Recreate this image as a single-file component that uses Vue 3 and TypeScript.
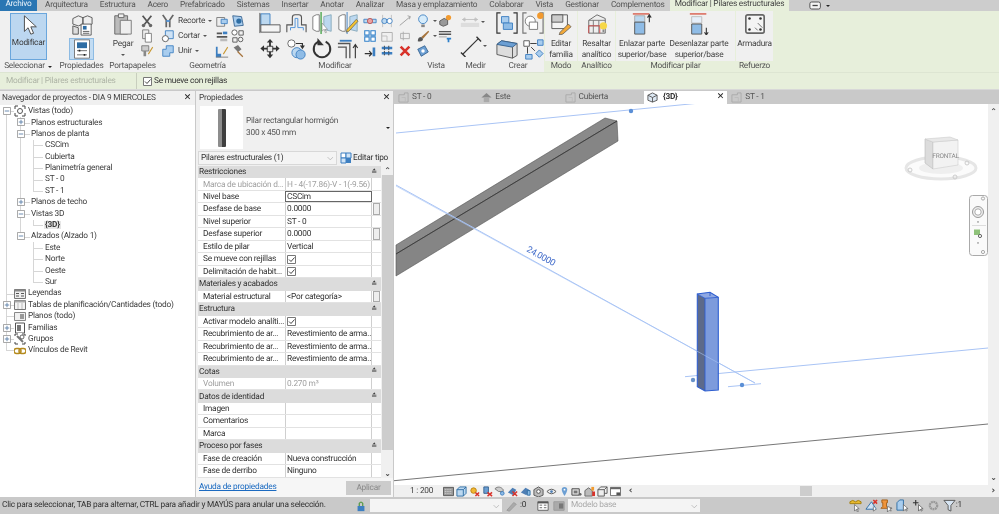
<script setup lang="ts">
// Revit: ribbon, project browser, properties palette and a 3D view
interface TreeRow {
  label: string
  lv: 0 | 1 | 2
  exp?: 'plus' | 'minus'
  icon?: string
  bold?: boolean
  guides: string[]
}

interface PropRow {
  name: string
  group?: boolean
  value?: string
  check?: boolean
  readonly?: boolean
  thumb?: boolean
  active?: boolean
}

const topTabs = ['Arquitectura', 'Estructura', 'Acero', 'Prefabricado', 'Sistemas', 'Insertar', 'Anotar', 'Analizar', 'Masa y emplazamiento', 'Colaborar', 'Vista', 'Gestionar', 'Complementos']

const tree: TreeRow[] = [
  { label: 'Vistas (todo)', lv: 0, exp: 'minus', icon: 't-views', guides: ['a start'] },
  { label: 'Planos estructurales', lv: 1, exp: 'plus', guides: ['a', 'b'] },
  { label: 'Planos de planta', lv: 1, exp: 'minus', guides: ['a', 'b'] },
  { label: 'CSCim', lv: 2, guides: ['a', 'b', 'c'] },
  { label: 'Cubierta', lv: 2, guides: ['a', 'b', 'c'] },
  { label: 'Planimetría general', lv: 2, guides: ['a', 'b', 'c'] },
  { label: 'ST - 0', lv: 2, guides: ['a', 'b', 'c'] },
  { label: 'ST - 1', lv: 2, guides: ['a', 'b', 'c half'] },
  { label: 'Planos de techo', lv: 1, exp: 'plus', guides: ['a', 'b'] },
  { label: 'Vistas 3D', lv: 1, exp: 'minus', guides: ['a', 'b'] },
  { label: '{3D}', lv: 2, bold: true, guides: ['a', 'b', 'c half'] },
  { label: 'Alzados (Alzado 1)', lv: 1, exp: 'minus', guides: ['a', 'b half'] },
  { label: 'Este', lv: 2, guides: ['a', 'c'] },
  { label: 'Norte', lv: 2, guides: ['a', 'c'] },
  { label: 'Oeste', lv: 2, guides: ['a', 'c'] },
  { label: 'Sur', lv: 2, guides: ['a', 'c half'] },
  { label: 'Leyendas', lv: 0, icon: 't-legend', guides: ['a'] },
  { label: 'Tablas de planificación/Cantidades (todo)', lv: 0, exp: 'plus', icon: 't-table', guides: ['a'] },
  { label: 'Planos (todo)', lv: 0, icon: 't-sheet', guides: ['a'] },
  { label: 'Familias', lv: 0, exp: 'plus', icon: 't-family', guides: ['a'] },
  { label: 'Grupos', lv: 0, exp: 'plus', icon: 't-group', guides: ['a'] },
  { label: 'Vínculos de Revit', lv: 0, icon: 't-link', guides: ['a half'] },
]

const props: PropRow[] = [
  { name: 'Restricciones', group: true },
  { name: 'Marca de ubicación d...', value: 'H - 4(-17.86)-V - 1(-9.56)', readonly: true },
  { name: 'Nivel base', value: 'CSCim', active: true },
  { name: 'Desfase de base', value: '0.0000', thumb: true },
  { name: 'Nivel superior', value: 'ST - 0' },
  { name: 'Desfase superior', value: '0.0000', thumb: true },
  { name: 'Estilo de pilar', value: 'Vertical' },
  { name: 'Se mueve con rejillas', check: true },
  { name: 'Delimitación de habit...', check: true },
  { name: 'Materiales y acabados', group: true },
  { name: 'Material estructural', value: '<Por categoría>', thumb: true },
  { name: 'Estructura', group: true },
  { name: 'Activar modelo analíti...', check: true },
  { name: 'Recubrimiento de ar...', value: 'Revestimiento de arma...' },
  { name: 'Recubrimiento de ar...', value: 'Revestimiento de arma...' },
  { name: 'Recubrimiento de ar...', value: 'Revestimiento de arma...' },
  { name: 'Cotas', group: true },
  { name: 'Volumen', value: '0.270 m³', readonly: true },
  { name: 'Datos de identidad', group: true },
  { name: 'Imagen', value: '' },
  { name: 'Comentarios', value: '' },
  { name: 'Marca', value: '' },
  { name: 'Proceso por fases', group: true },
  { name: 'Fase de creación', value: 'Nueva construcción' },
  { name: 'Fase de derribo', value: 'Ninguno' },
]

const viewTabs = [
  { label: 'ST - 0', icon: 't-plan' },
  { label: 'Este', icon: 't-elev' },
  { label: 'Cubierta', icon: 't-plan' },
  { label: '{3D}', icon: 't-3d', active: true },
  { label: 'ST - 1', icon: 't-plan' },
]

const viewBar = ['v-detail', 'v-style', 'v-sun', 'v-shadow', 'v-render', 'v-crop', 'v-crop2', 'v-temp', 'v-hide', 'v-pin', 'v-lock', 'v-rev', 'v-cube', 'v-frame']
const statusIcons = ['s-link', 's-under', 's-pin', 's-face', 's-drag', 's-gear']
</script>

<template>
  <div class="app">
    <svg class="defs" xmlns="http://www.w3.org/2000/svg">
      <!-- cinta -->
      <symbol id="cursor" viewBox="0 0 24 24"><path d="M7 2v17l4-4 3 7 3-1-3-7h6z" fill="#fff" stroke="#444"/></symbol>
      <symbol id="typeprops" viewBox="0 0 24 24"><path d="M2 5l6-3 5 2v7l-5 2-6-2zM13 4l5-2 5 2v7l-5 2-5-2z" fill="#eee" stroke="#555"/><path d="M2 13l6 2v7H2z" fill="#ddd" stroke="#555"/><path d="M11 11h11v12H11z" fill="#fff" stroke="#555"/><path d="M13 13h4v4h-4z" fill="#2e6da4"/><path d="M13 19h7M13 21h7" stroke="#555"/></symbol>
      <symbol id="props" viewBox="0 0 24 24"><path d="M3 1h18v22H3z" fill="#fff" stroke="#666"/><path d="M6 4h12v7H6z" fill="#2e6da4"/><path d="M6 14h12M6 19h12" stroke="#555"/><path d="M9 13v2M15 18v2" stroke="#222" stroke-width="2"/></symbol>
      <symbol id="paste" viewBox="0 0 24 24"><path d="M3 3h14v20H3z" fill="#bbb" stroke="#666"/><path d="M7 1h6v4H7z" fill="#eee" stroke="#666"/><path d="M9 8h12v15H9z" fill="#eee" stroke="#777"/></symbol>
      <symbol id="scissors" viewBox="0 0 16 16"><path d="M3 2l8 10M13 2L5 12" stroke="#555" stroke-width="2"/><circle cx="4" cy="13" r="2" fill="#666"/><circle cx="12" cy="13" r="2" fill="#666"/></symbol>
      <symbol id="copy" viewBox="0 0 16 16"><path d="M3 1h7v10H3z" fill="#eee" stroke="#777"/><path d="M6 5h7v10H6z" fill="#fff" stroke="#777"/></symbol>
      <symbol id="match" viewBox="0 0 16 16"><path d="M2 2h8v6H2z" fill="#ccc" stroke="#777"/><path d="M4 8v6h3v-6" fill="#888"/><path d="M9 11l5-8 1 1-5 8z" fill="#c8962e"/></symbol>
      <symbol id="trim" viewBox="0 0 16 16"><path d="M2 1l4 6v8M14 1L10 7v8" fill="none" stroke="#666" stroke-width="2"/><path d="M6 8h4" stroke="#4a90d9" stroke-width="2"/></symbol>
      <symbol id="cut" viewBox="0 0 16 16"><path d="M5 2h9v9H5z" fill="#cfe3f6" stroke="#3d7fc1"/><circle cx="5" cy="11" r="3.5" fill="#fff" stroke="#555"/></symbol>
      <symbol id="join" viewBox="0 0 16 16"><path d="M6 2h8v8H10v4H2V6h4z" fill="#a9cdee" stroke="#3d7fc1"/></symbol>
      <symbol id="g1" viewBox="0 0 16 16"><path d="M2 4h9v10H2z" fill="#eee" stroke="#777"/><path d="M7 6h7v5H7z" fill="#a9cdee" stroke="#3d7fc1"/></symbol>
      <symbol id="g2" viewBox="0 0 16 16"><path d="M2 2l10 1 2 10-10 1z" fill="#a9cdee" stroke="#35618f"/><circle cx="9" cy="8" r="3" fill="#2e6da4"/></symbol>
      <symbol id="g3" viewBox="0 0 16 16"><path d="M2 5h6M2 9h12" stroke="#555" stroke-width="2"/><path d="M9 3h5v3H9z" fill="#3d7fc1"/><path d="M6 11h8v3H6z" fill="#bbb"/></symbol>
      <symbol id="g4" viewBox="0 0 16 16"><circle cx="4" cy="4" r="3" fill="#fff" stroke="#555"/><path d="M9 2h5v5H9zM2 10h5v5H2z" fill="none" stroke="#555"/><circle cx="11" cy="12" r="2.6" fill="none" stroke="#555"/></symbol>
      <symbol id="g5" viewBox="0 0 16 16"><path d="M1 15V3h2v8h4V15z" fill="#3d7fc1"/><path d="M9 11l5-8 1 1-5 8z" fill="#c8962e"/><path d="M1 15h14" stroke="#777"/></symbol>
      <symbol id="hammer" viewBox="0 0 16 16"><path d="M3 4l5-3 4 5-4 3z" fill="#777"/><path d="M8 8l6 6-1 1-6-6z" fill="#a5733c"/></symbol>
      <symbol id="align" viewBox="0 0 24 24"><path d="M2 2h10v12H2z" fill="#bcd8f0" stroke="#3d7fc1"/><path d="M2 14h21v8H2z" fill="#f4f4f4" stroke="#555"/><path d="M1 1v22" stroke="#444"/></symbol>
      <symbol id="offset" viewBox="0 0 24 24"><path d="M2 22V14h6V6q0-3 3-3h4q3 0 3 3v8h5v8" fill="none" stroke="#555" stroke-width="1.2"/><path d="M6 20v-3h5V7h3v10h6v3" fill="none" stroke="#4a90d9"/></symbol>
      <symbol id="mirror1" viewBox="0 0 24 24"><path d="M2 5q4-3 7-2v18q-3 1-7-2z" fill="#fff" stroke="#777"/><path d="M14 5l8-2v18l-8-2z" fill="#bcd8f0" stroke="#8ab"/><path d="M11 0v24" stroke="#3fa142" stroke-width="1.4"/><path d="M12 12v9l2-2 2 4 1-1-2-3h3z" fill="#fff" stroke="#777" stroke-width=".6"/></symbol>
      <symbol id="mirror2" viewBox="0 0 24 24"><path d="M2 5q4-3 7-2v18q-3 1-7-2z" fill="#fff" stroke="#777"/><path d="M14 5l8-2v18l-8-2z" fill="#bcd8f0" stroke="#8ab"/><path d="M11 0v24" stroke="#3d7fc1"/><path d="M11 19l10-11 2 2-10 11-3 1z" fill="#f2c230" stroke="#555" stroke-width=".7"/></symbol>
      <symbol id="move" viewBox="0 0 24 24"><path d="M12 1l3.5 4h-2.5v5.500h5.500v-2.500l4 3.500-4 3.500v-2.500h-5.500v5.500h2.500l-3.500 4-3.500-4h2.500v-5.500h-5.500v2.500l-4-3.500 4-3.500v2.500h5.500v-5.500h-2.500z" fill="#333"/><path d="M9 9h6v6H9z" fill="#e8e8e8" stroke="#333"/></symbol>
      <symbol id="clone" viewBox="0 0 24 24"><circle cx="7" cy="6" r="4" fill="#fff" stroke="#666"/><path d="M12 6h7v4M17 8l2 3 2-3" fill="none" stroke="#333" stroke-width="1.3"/><circle cx="13" cy="16" r="5.500" fill="#bcd8f0" stroke="#3d7fc1"/><circle cx="17" cy="18" r="5" fill="#8fbce6" stroke="#3d7fc1"/></symbol>
      <symbol id="rotate" viewBox="0 0 24 24"><path d="M8 4a9 9 0 1 0 8 0" fill="none" stroke="#333" stroke-width="2.200"/><path d="M7 0v8h7" fill="#333"/></symbol>
      <symbol id="extend" viewBox="0 0 24 24"><path d="M1 6h13v16M1 10h9v12" fill="none" stroke="#555" stroke-width="1.4"/><path d="M3 3h13" stroke="#3d7fc1" stroke-width="2"/><path d="M20 22V8M17.500 11l2.500-4 2.500 4" fill="none" stroke="#333" stroke-width="1.200"/></symbol>
      <symbol id="m1" viewBox="0 0 16 16"><path d="M1 6h14v4H1z" fill="#bcd8f0" stroke="#3d7fc1"/><circle cx="8" cy="8" r="3" fill="#e9a3a3" stroke="#b55"/></symbol>
      <symbol id="m2" viewBox="0 0 16 16"><path d="M3 1v14M13 1v14" stroke="#bbb"/><circle cx="5" cy="8" r="3" fill="#bcd8f0" stroke="#3d7fc1"/><circle cx="11" cy="8" r="3" fill="#fff" stroke="#3d7fc1"/></symbol>
      <symbol id="m3" viewBox="0 0 16 16"><path d="M2 2h5v5H2zM9 2h5v5H9zM2 9h5v5H2zM9 9h5v5H9z" fill="#fff" stroke="#2e7fc9" stroke-width="1.200"/></symbol>
      <symbol id="m4" viewBox="0 0 16 16"><path d="M2 4h12v10H2z" fill="none" stroke="#aaa"/><path d="M2 8h6v6" fill="none" stroke="#bbb"/></symbol>
      <symbol id="m5" viewBox="0 0 16 16"><path d="M2 11h8M7 8l3 3-3 3" fill="none" stroke="#333" stroke-width="1.300"/><path d="M11 4h3v10h-3z" fill="#3d7fc1"/></symbol>
      <symbol id="m6" viewBox="0 0 16 16"><path d="M2 3h12v3H2zM2 9h12v3H2z" fill="#3d7fc1"/><path d="M5 2v12M10 2v12" stroke="#333" stroke-dasharray="2 1"/></symbol>
      <symbol id="m7" viewBox="0 0 16 16"><path d="M2 13L14 3M11 2l3 1-1 3" fill="none" stroke="#999"/></symbol>
      <symbol id="m8" viewBox="0 0 16 16"><path d="M3 5h10v6H3z" fill="none" stroke="#aaa"/><path d="M6 3v10" stroke="#aaa"/></symbol>
      <symbol id="del" viewBox="0 0 16 16"><path d="M3 3l10 10M13 3L3 13" stroke="#d8322a" stroke-width="3"/></symbol>
      <symbol id="bulb" viewBox="0 0 16 16"><circle cx="8" cy="6" r="5" fill="#d6ecfb" stroke="#3d7fc1"/><path d="M6 12h4v3H6z" fill="#888"/></symbol>
      <symbol id="vis2" viewBox="0 0 16 16"><path d="M2 8l5-3 4 2v5l-5 2-4-2z" fill="#999" stroke="#555"/><circle cx="12" cy="4" r="3" fill="#f29a2e"/></symbol>
      <symbol id="brush" viewBox="0 0 16 16"><path d="M6 9l8-7 1 1-7 8z" fill="#a5733c"/><path d="M2 14q0-5 4-5l2 2q0 4-6 3z" fill="#555"/></symbol>
      <symbol id="vis4" viewBox="0 0 16 16"><path d="M1 3h14M1 6h14" stroke="#555" stroke-width="1.500"/><path d="M1 9h9" stroke="#999"/><path d="M10 10h5v2h-2v3h-2v-3h-1z" fill="#2e7fc9"/></symbol>
      <symbol id="vis5" viewBox="0 0 16 16"><path d="M2 6l8-4 4 7-8 5z" fill="#6c9fd3" stroke="#35618f"/><circle cx="8" cy="8" r="2" fill="#fff"/></symbol>
      <symbol id="dim" viewBox="0 0 24 16"><path d="M3 5h18M3 5l3-2v4zM21 5l-3-2v4z" fill="none" stroke="#bbb"/><path d="M1 9h22v5H1z" fill="#ddd"/></symbol>
      <symbol id="measure" viewBox="0 0 24 24"><path d="M3 21L20 4" stroke="#333" stroke-width="1.200"/><path d="M1 19l5 5M18 2l5 5" stroke="#333" stroke-width="1.500"/></symbol>
      <symbol id="create1" viewBox="0 0 24 24"><path d="M5 1H1v22h4M19 1h4v22h-4" fill="none" stroke="#333" stroke-width="1.300"/><path d="M6 5h8v7H6z" fill="#a9cdee" stroke="#3d7fc1"/><path d="M8 12h10v7H8z" fill="#8fbce6" stroke="#3d7fc1"/></symbol>
      <symbol id="create2" viewBox="0 0 24 24"><path d="M5 1H1v22h4M19 1h4v22h-4" fill="none" stroke="#777" stroke-width="1.300"/><circle cx="9" cy="10" r="5.500" fill="#fff" stroke="#777"/><path d="M8 11h9v8H8z" fill="#fff" stroke="#777"/><circle cx="20" cy="4" r="3.500" fill="#f29a2e"/></symbol>
      <symbol id="create3" viewBox="0 0 24 24"><path d="M1 7l5-4 17 3v13l-5 3L1 18z" fill="#ddd" stroke="#555"/><path d="M6 3l17 3-5 4L1 7z" fill="#6c9fd3" stroke="#35618f"/><path d="M18 10v12" stroke="#555"/></symbol>
      <symbol id="create4" viewBox="0 0 24 24"><path d="M2 3h6v6H2z" fill="#fff" stroke="#555"/><path d="M17 2h6v6h-6zM4 18h7v5H4z" fill="#a9cdee" stroke="#3d7fc1"/><path d="M15 17l4-4 4 4-4 4z" fill="#a9cdee" stroke="#3d7fc1"/><path d="M9 6h7M10 10l4 4M6 10v7" stroke="#333"/></symbol>
      <symbol id="edit" viewBox="0 0 24 24"><path d="M2 2h17v15H2z" fill="#f4f4f4" stroke="#555"/><path d="M2 2h12v8H2z" fill="#ccc" stroke="#555"/><path d="M11 21l9-9 3 3-9 8-4 1z" fill="#f2a93a" stroke="#555" stroke-width=".8"/></symbol>
      <symbol id="analytic" viewBox="0 0 24 24"><path d="M3 8l9-6 9 4v16H3z" fill="#eee" stroke="#666"/><path d="M3 8h18M8 8v14M14 8v14M3 14h18" stroke="#777"/><path d="M3 22V14h12v8" fill="none" stroke="#d24a4a"/><circle cx="19" cy="14" r="4" fill="#f6d748"/><path d="M18 18h2v3h-2z" fill="#888"/></symbol>
      <symbol id="attach" viewBox="0 0 24 24"><path d="M2 1h18" stroke="#d85a4a" stroke-width="1.500"/><path d="M4 3h11v7H4z" fill="#bcd8f0" stroke="#aaa"/><path d="M4 10h11v13H4z" fill="#8fbce6" stroke="#555"/><path d="M20 10V3M18 5l2-3 2 3" fill="none" stroke="#333" stroke-width="1.200"/></symbol>
      <symbol id="detach" viewBox="0 0 24 24"><path d="M2 1h18" stroke="#d85a4a" stroke-width="1.500"/><path d="M4 4h11v7H4z" fill="#e6effa" stroke="#bbb"/><path d="M4 12h11v11H4z" fill="#8fbce6" stroke="#555"/><path d="M20 16v7M18 21l2 3 2-3" fill="none" stroke="#333" stroke-width="1.200"/></symbol>
      <symbol id="rebar" viewBox="0 0 24 24"><rect x="2" y="2" width="20" height="20" rx="2" fill="#f4f4f4" stroke="#666" stroke-width="1.800"/><circle cx="6" cy="6" r="1.400" fill="#333"/><circle cx="18" cy="6" r="1.400" fill="#333"/><circle cx="6" cy="18" r="1.400" fill="#333"/><circle cx="18" cy="18" r="1.400" fill="#333"/><path d="M15 11l5 5M12 16l3 3" stroke="#666"/></symbol>
      <symbol id="qat" viewBox="0 0 16 10"><rect x="1" y="1" width="12" height="8" rx="2" fill="#f4f4f4" stroke="#444"/><path d="M4 5h6" stroke="#444" stroke-width="1.500"/></symbol>
      <!-- arbol -->
      <symbol id="plus" viewBox="0 0 9 9"><path d="M.5.500h8v8h-8z" fill="#fff" stroke="#9a9a9a"/><path d="M2 4.500h5M4.500 2v5" stroke="#5a7fa8"/></symbol>
      <symbol id="minus" viewBox="0 0 9 9"><path d="M.5.500h8v8h-8z" fill="#fff" stroke="#9a9a9a"/><path d="M2 4.500h5" stroke="#5a7fa8"/></symbol>
      <symbol id="t-views" viewBox="0 0 12 12"><path d="M1 4V1h3M8 1h3v3M1 8v3h3M8 11h3V8" fill="none" stroke="#444"/><circle cx="6" cy="6" r="2.500" fill="#fff" stroke="#555"/></symbol>
      <symbol id="t-legend" viewBox="0 0 12 12"><path d="M.5 1.500h11v9H.5z" fill="#eee" stroke="#777"/><path d="M.5 1.500h11v2H.5z" fill="#888"/><path d="M2 5.500h3M2 8h3M7 5.500h3M7 8h3" stroke="#555"/></symbol>
      <symbol id="t-table" viewBox="0 0 12 12"><path d="M.5 1.500h11v9H.5z" fill="#f4f4f4" stroke="#777"/><path d="M.5 1.500h11v2H.5z" fill="#aaa"/><path d="M4 4v6M8 4v6" stroke="#bbb"/></symbol>
      <symbol id="t-sheet" viewBox="0 0 12 12"><path d="M.5 2.500h11v8H.5z" fill="#f0f0f0" stroke="#888"/><path d="M6 4h4v5H6z" fill="#999"/></symbol>
      <symbol id="t-family" viewBox="0 0 12 12"><path d="M1.500 1h9v10h-9z" fill="#fff" stroke="#555"/><path d="M3 3h4v6H3z" fill="#777"/></symbol>
      <symbol id="t-group" viewBox="0 0 12 12"><path d="M1 3V1h3M8 1h3v2M1 9v2h3M8 11h3V9" fill="none" stroke="#444"/><path d="M3 3l6 6" stroke="#777" stroke-width="2"/><circle cx="8" cy="4" r="2" fill="none" stroke="#666"/></symbol>
      <symbol id="t-link" viewBox="0 0 12 12"><rect x="0" y="3.500" width="7" height="5" rx="2.500" fill="none" stroke="#b48a1e" stroke-width="1.500"/><rect x="5" y="3.500" width="7" height="5" rx="2.500" fill="none" stroke="#b48a1e" stroke-width="1.500"/></symbol>
      <symbol id="t-plan" viewBox="0 0 12 12"><path d="M1 3h6V1h4v10H1z" fill="none" stroke="#aaa"/><path d="M4 6h4v5" fill="none" stroke="#bbb"/></symbol>
      <symbol id="t-elev" viewBox="0 0 12 12"><path d="M6 1L.5 6h11z" fill="#888"/><path d="M3 6h6v5H3z" fill="#aaa"/></symbol>
      <symbol id="t-3d" viewBox="0 0 12 12"><path d="M6 1l5 2.500v5.500L6 11 1 9V3.500z" fill="#dce7f2" stroke="#555"/><path d="M1 3.500L6 6l5-2.500M6 6v5" fill="none" stroke="#555"/></symbol>
      <symbol id="edit-type" viewBox="0 0 12 12"><path d="M1 1h5v5H1z" fill="#fff" stroke="#3d7fc1"/><path d="M6 1h5v5H6zM1 6h5v5H1z" fill="#cfe3f6" stroke="#3d7fc1"/><path d="M6 6h5v5H6z" fill="#3d7fc1"/></symbol>
      <symbol id="checkmark" viewBox="0 0 9 9"><path d="M.5.500h8v8h-8z" fill="#fff" stroke="#777"/><path d="M2 4.500l2 2 3.500-4" fill="none" stroke="#444"/></symbol>
      <!-- barra de vista -->
      <symbol id="v-detail" viewBox="0 0 12 12"><path d="M.5 1.500h11v9H.5z" fill="#999" stroke="#555"/><path d="M2 4h8M2 6h8M2 8h8" stroke="#ddd" stroke-dasharray="1 1"/></symbol>
      <symbol id="v-style" viewBox="0 0 12 12"><path d="M1 4l3-3h7v7l-3 3H1z" fill="#bcd8f0" stroke="#2e6da4"/><path d="M1 4h7v7M8 4l3-3" fill="none" stroke="#2e6da4"/></symbol>
      <symbol id="v-sun" viewBox="0 0 12 12"><circle cx="5" cy="5" r="3" fill="#f2b632" stroke="#b98412"/><path d="M7 7l4 4M11 7l-4 4" stroke="#d8322a" stroke-width="1.600"/></symbol>
      <symbol id="v-shadow" viewBox="0 0 12 12"><path d="M2 1h5v7H2z" fill="#6c9fd3" stroke="#35618f"/><path d="M6 7l5 4M11 7l-5 4" stroke="#d8322a" stroke-width="1.600"/></symbol>
      <symbol id="v-render" viewBox="0 0 12 12"><path d="M1 3c3-3 7-2 9 1v2H5z" fill="#ccc" stroke="#777"/><circle cx="9" cy="8" r="2" fill="#8fbce6" stroke="#3d7fc1"/></symbol>
      <symbol id="v-crop" viewBox="0 0 12 12"><path d="M1 7l5-5 4 2-3 6z" fill="#4f7fb5"/><path d="M6 6l5 5M11 6l-5 5" stroke="#d8322a" stroke-width="1.600"/></symbol>
      <symbol id="v-crop2" viewBox="0 0 12 12"><path d="M1 7l5-5 4 2-3 6z" fill="#4f7fb5"/><path d="M8 5h3v5H8z" fill="#8fbce6" stroke="#2e6da4"/></symbol>
      <symbol id="v-temp" viewBox="0 0 12 12"><path d="M6 1l5 3v6l-5 2-5-2V4z" fill="#bbb" stroke="#555"/><circle cx="6" cy="6" r="2" fill="#fff" stroke="#555"/></symbol>
      <symbol id="v-hide" viewBox="0 0 12 12"><path d="M1 6q5-5 10 0-5 5-10 0z" fill="none" stroke="#555"/><circle cx="6" cy="6" r="1.500" fill="#4f7fb5"/></symbol>
      <symbol id="v-pin" viewBox="0 0 12 12"><path d="M6 1q3 0 3 3 0 2-3 7-3-5-3-7 0-3 3-3z" fill="#6c9fd3"/><circle cx="6" cy="4" r="1" fill="#fff"/></symbol>
      <symbol id="v-lock" viewBox="0 0 12 12"><path d="M1 3h8v7H1z" fill="#ddd" stroke="#444"/><path d="M3 5h4v3H3z" fill="#777"/><circle cx="10" cy="9" r="1.500" fill="#666"/></symbol>
      <symbol id="v-rev" viewBox="0 0 12 12"><path d="M1 5l4-3 4 3v6H1z" fill="#bbb" stroke="#666"/><path d="M8 1h3v4H8z" fill="#f29a2e"/><path d="M9 6h3v5H9z" fill="#d8322a"/></symbol>
      <symbol id="v-cube" viewBox="0 0 12 12"><path d="M1 4h7v7H1z" fill="#eee" stroke="#555"/><path d="M4 1h7v7H8M1 4l3-3M8 4l3-3" fill="none" stroke="#555"/></symbol>
      <symbol id="v-frame" viewBox="0 0 12 12"><path d="M.5 1.500h11v9H.5z" fill="#fff" stroke="#666"/><path d="M.5 1.500h11v2H.5z" fill="#666"/><path d="M7 7h4v3H7z" fill="#555"/></symbol>
      <!-- barra de estado -->
      <symbol id="s-link" viewBox="0 0 14 14"><path d="M1 3q3-3 6 0 3-3 6 0v2H1z" fill="#e8b92e" stroke="#a27e12"/><path d="M6 6v7l2-2 1 3 1-.5-1-3h2z" fill="#fff" stroke="#555" stroke-width=".7"/></symbol>
      <symbol id="s-under" viewBox="0 0 14 14"><path d="M1 11L7 3l5 8z" fill="#cfe3f6" stroke="#2e6da4"/><path d="M9 1l4 4M13 1L9 5" stroke="#d8322a" stroke-width="1.600"/><path d="M9 8v5l3-2" fill="#fff" stroke="#555" stroke-width=".7"/></symbol>
      <symbol id="s-pin" viewBox="0 0 14 14"><path d="M2 1h6v3H7v4l2 2H1l2-2V4H2z" fill="#f0953c" stroke="#a4601a"/><path d="M8 8v6l2-2 2 1-1-3h2z" fill="#fff" stroke="#555" stroke-width=".7"/></symbol>
      <symbol id="s-face" viewBox="0 0 14 14"><path d="M1 4l3-3h4v11H1z" fill="#a9cdee" stroke="#2e6da4"/><path d="M8 6v7l2-2 1 2 1-.5-1-2h2z" fill="#fff" stroke="#555" stroke-width=".7"/></symbol>
      <symbol id="s-drag" viewBox="0 0 14 14"><path d="M4 1v6M1 4h6" stroke="#333" stroke-width="1.200"/><path d="M7 6v7l2-2 1 2 1-.5-1-2h2z" fill="#fff" stroke="#555" stroke-width=".8"/></symbol>
      <symbol id="s-gear" viewBox="0 0 14 14"><circle cx="7" cy="7" r="4" fill="none" stroke="#999" stroke-width="2.400" stroke-dasharray="2 .6"/></symbol>
      <symbol id="s-filter" viewBox="0 0 14 14"><path d="M1 1.500h12L8.500 7v6l-3-1.500V7z" fill="#d6e4f2" stroke="#555"/></symbol>
      <symbol id="s-work" viewBox="0 0 14 14"><path d="M3 7h8v6H3z" fill="#3d7fc1"/><path d="M5 7V4q2-3 4 0v3" fill="none" stroke="#5a9a4a" stroke-width="1.500"/></symbol>
      <symbol id="s-sync" viewBox="0 0 14 14"><path d="M1 12l8-9 3 2-8 8z" fill="#aaa" stroke="#999"/></symbol>
      <symbol id="s-model" viewBox="0 0 14 14"><path d="M1 2h12v10H1z" fill="#fff" stroke="#555"/><path d="M1 2h12v2H1z" fill="#555"/><path d="M3 6h3M3 9h3M8 6h3M8 9h3" stroke="#555"/></symbol>
      <symbol id="s-opt" viewBox="0 0 14 14"><path d="M1 2h12v10H1z" fill="#aaa" stroke="#999"/><path d="M7 4h5v6H7z" fill="#777"/></symbol>
    </svg>

    <nav class="tabs">
      <span class="tab-file">Archivo</span>
      <span v-for="t in topTabs" :key="t" class="tab">{{ t }}</span>
      <span class="tab-active">Modificar | Pilares estructurales</span>
      <svg class="qat"><use href="#qat" /></svg>
      <i class="caret dark" />
    </nav>

    <section class="ribbon">
      <div class="panel p-sel">
        <div class="pbody center">
          <div class="modbtn">
            <svg class="i22"><use href="#cursor" /></svg>
            <span>Modificar</span>
          </div>
        </div>
        <div class="plabel">Seleccionar <i class="caret dark" /></div>
      </div>
      <div class="panel p-prop">
        <div class="pbody stack center">
          <svg class="i22 big-a"><use href="#typeprops" /></svg>
          <div class="propbtn"><svg class="i18"><use href="#props" /></svg></div>
        </div>
        <div class="plabel">Propiedades</div>
      </div>
      <div class="panel p-port">
        <div class="pbody row">
          <div class="bigcol narrow">
            <svg class="i22"><use href="#paste" /></svg>
            <span>Pegar</span>
            <i class="caret" />
          </div>
          <div class="col">
            <svg class="i12"><use href="#scissors" /></svg>
            <svg class="i12"><use href="#copy" /></svg>
            <svg class="i12"><use href="#match" /></svg>
          </div>
        </div>
        <div class="plabel">Portapapeles</div>
      </div>
      <div class="panel p-geo">
        <div class="pbody row">
          <div class="col geo-text">
            <span class="line"><svg class="i12"><use href="#trim" /></svg><b>Recorte</b><i class="caret" /></span>
            <span class="line"><svg class="i12"><use href="#cut" /></svg><b>Cortar</b><i class="caret" /></span>
            <span class="line"><svg class="i12"><use href="#join" /></svg><b>Unir</b><i class="caret" /></span>
          </div>
          <div class="col">
            <svg class="i12"><use href="#g1" /></svg>
            <svg class="i12"><use href="#g3" /></svg>
            <svg class="i12"><use href="#g5" /></svg>
          </div>
          <div class="col">
            <svg class="i12"><use href="#g2" /></svg>
            <svg class="i12"><use href="#g4" /></svg>
            <svg class="i12"><use href="#hammer" /></svg>
          </div>
        </div>
        <div class="plabel">Geometría</div>
      </div>
      <div class="panel p-mod">
        <div class="pbody row">
          <div class="bigstack"><svg class="i20"><use href="#align" /></svg><svg class="i20"><use href="#move" /></svg></div>
          <div class="bigstack"><svg class="i20"><use href="#offset" /></svg><svg class="i20"><use href="#clone" /></svg></div>
          <div class="bigstack"><svg class="i20"><use href="#mirror1" /></svg><svg class="i20"><use href="#rotate" /></svg></div>
          <div class="bigstack"><svg class="i20"><use href="#mirror2" /></svg><svg class="i20"><use href="#extend" /></svg></div>
          <div class="col wide"><svg class="i12"><use href="#m1" /></svg><svg class="i12"><use href="#m3" /></svg><svg class="i12"><use href="#m5" /></svg></div>
          <div class="col wide"><svg class="i12"><use href="#m2" /></svg><svg class="i12"><use href="#m4" /></svg><svg class="i12"><use href="#m6" /></svg></div>
          <div class="col wide"><svg class="i12"><use href="#m7" /></svg><svg class="i12"><use href="#m8" /></svg><svg class="i12"><use href="#del" /></svg></div>
        </div>
        <div class="plabel">Modificar</div>
      </div>
      <div class="panel p-vis">
        <div class="pbody row">
          <div class="col vis-a">
            <span class="line"><svg class="i12"><use href="#bulb" /></svg><i class="caret" /></span>
            <span class="line"><svg class="i12"><use href="#brush" /></svg><i class="caret" /></span>
            <span class="line"><svg class="i12"><use href="#vis5" /></svg></span>
          </div>
          <div class="col">
            <svg class="i12"><use href="#vis2" /></svg>
            <svg class="i12"><use href="#vis4" /></svg>
            <span class="i12" />
          </div>
        </div>
        <div class="plabel">Vista</div>
      </div>
      <div class="panel p-med">
        <div class="pbody stack med">
          <span class="line"><svg class="i20 short"><use href="#dim" /></svg><i class="caret" /></span>
          <span class="line"><svg class="i20"><use href="#measure" /></svg><i class="caret" /></span>
        </div>
        <div class="plabel">Medir</div>
      </div>
      <div class="panel p-cre">
        <div class="pbody row crear">
          <div class="bigstack"><svg class="i20"><use href="#create1" /></svg><svg class="i20"><use href="#create3" /></svg></div>
          <div class="bigstack"><svg class="i20"><use href="#create2" /></svg><svg class="i20"><use href="#create4" /></svg></div>
        </div>
        <div class="plabel">Crear</div>
      </div>
      <div class="panel ctx p-modo">
        <div class="pbody"><div class="bigcol"><svg class="i22"><use href="#edit" /></svg><span>Editar<br>familia</span></div></div>
        <div class="plabel">Modo</div>
      </div>
      <div class="panel ctx p-ana">
        <div class="pbody"><div class="bigcol"><svg class="i22"><use href="#analytic" /></svg><span>Resaltar<br>analítico</span></div></div>
        <div class="plabel">Analítico</div>
      </div>
      <div class="panel ctx p-pil">
        <div class="pbody row">
          <div class="bigcol half-a"><svg class="i22"><use href="#attach" /></svg><span>Enlazar parte<br>superior/base</span></div>
          <div class="bigcol half-b"><svg class="i22"><use href="#detach" /></svg><span>Desenlazar parte<br>superior/base</span></div>
        </div>
        <div class="plabel">Modificar pilar</div>
      </div>
      <div class="panel ctx p-ref">
        <div class="pbody"><div class="bigcol"><svg class="i22"><use href="#rebar" /></svg><span>Armadura</span></div></div>
        <div class="plabel">Refuerzo</div>
      </div>
    </section>

    <section class="options">
      <span class="ctx-name">Modificar | Pilares estructurales</span>
      <span class="opt-check"><svg class="i9"><use href="#checkmark" /></svg>Se mueve con rejillas</span>
    </section>

    <main class="main">
      <aside class="browser">
        <header class="phead">Navegador de proyectos - DIA 9 MIERCOLES<span class="close">✕</span></header>
        <ul class="tree">
          <li v-for="(r, i) in tree" :key="i" class="node" :class="`lv${r.lv}`">
            <i v-for="g in r.guides" :key="g" class="vl" :class="g" />
            <i class="hl" />
            <svg v-if="r.exp" class="exp"><use :href="`#${r.exp}`" /></svg>
            <svg v-if="r.icon" class="i12 node-icon"><use :href="`#${r.icon}`" /></svg>
            <span :class="{ bold: r.bold }">{{ r.label }}</span>
          </li>
        </ul>
      </aside>

      <aside class="palette">
        <header class="phead">Propiedades<span class="close">✕</span></header>
        <div class="type">
          <div class="thumb"><i class="pillar" /></div>
          <div class="type-name">Pilar rectangular hormigón<br>300 x 450 mm</div>
          <i class="caret dark" />
        </div>
        <div class="filter">
          <div class="filter-box">Pilares estructurales (1)<span class="chev">⌵</span></div>
          <span class="edit-type"><svg class="i12"><use href="#edit-type" /></svg>Editar tipo</span>
        </div>
        <div class="props-wrap">
          <div class="ptable">
            <div v-for="(p, i) in props" :key="i" class="prow" :class="{ group: p.group, ro: p.readonly }">
              <template v-if="p.group">
                <span class="gname">{{ p.name }}</span><span class="gmark">≛</span>
              </template>
              <template v-else>
                <span class="pname">{{ p.name }}</span>
                <span class="pval" :class="{ active: p.active }">
                  <svg v-if="p.check" class="i9"><use href="#checkmark" /></svg>{{ p.value }}
                </span>
                <span class="pbtn"><i v-if="p.thumb" class="pbtn-thumb" /></span>
              </template>
            </div>
          </div>
          <div class="vscroll">
            <span class="arrow">⌃</span>
            <i class="vthumb" />
            <span class="arrow down">⌄</span>
          </div>
        </div>
        <footer class="pfoot">
          <a class="help">Ayuda de propiedades</a>
          <span class="apply">Aplicar</span>
        </footer>
      </aside>

      <section class="view">
        <div class="vtabs">
          <div v-for="(t, i) in viewTabs" :key="i" class="vtab" :class="{ on: t.active }">
            <svg class="i11"><use :href="`#${t.icon}`" /></svg>
            <span>{{ t.label }}</span>
            <span v-if="t.active" class="close">✕</span>
          </div>
        </div>
        <div class="canvas-row">
          <svg class="canvas" viewBox="394 104 594 381" xmlns="http://www.w3.org/2000/svg">
            <path d="M396 133L700 103" stroke="#a9c4f5" />
            <circle cx="631" cy="111" r="2.200" fill="#5b8fd6" />
            <path d="M396 245L605 118l12 3-221 133z" fill="#8a8a8a" stroke="#555" stroke-width=".6" />
            <path d="M396 254L617 121l1 20-222 135z" fill="#858585" stroke="#555" stroke-width=".6" />
            <path d="M396 254L617 121" stroke="#333" stroke-width=".8" />
            <path d="M396 185L755 383" stroke="#a9c4f5" />
            <text x="541" y="259" class="dim" transform="rotate(29 541 256)">24.0000</text>
            <path d="M685 376.700L988 348" stroke="#a9c4f5" />
            <path d="M728 386.700L761 383.700" stroke="#a9c4f5" />
            <circle cx="693" cy="380" r="2.200" fill="#6a93c9" />
            <circle cx="742" cy="385" r="2.200" fill="#5b8fd6" />
            <path d="M697.300 294L705 298.300V391L697.300 386.700z" fill="#5d6a8a" />
            <path d="M705 298.300L718.300 297.300V390L705 391z" fill="#7d9bdc" />
            <path d="M697.300 294L710 292.300 718.300 297.300 705 298.300z" fill="#8fa8e2" />
            <path d="M697.300 294L705 298.300 718.300 297.300M705 298.300V391M710 292.300V296" fill="none" stroke="#2f5fd0" stroke-width=".9" />
            <path d="M697.300 294V386.700L705 391 718.300 390V297.300L710 292.300z" fill="none" stroke="#2f5fd0" stroke-width="1.100" />
            <path d="M396 186L755 383" stroke="#a9c4f5" stroke-opacity=".6" />
            <path d="M394 480.700L988 424" stroke="#777" stroke-width="1" />

            <g class="cube">
              <ellipse cx="941" cy="168" rx="35" ry="11" fill="#fbfbfb" stroke="#e6e6e6" stroke-width="3" />
              <ellipse cx="941" cy="168" rx="22" ry="6" fill="#efefef" />
              <path d="M925 139l8 3v27l-8-6z" fill="#dcdcdc" stroke="#bbb" stroke-width=".6" />
              <path d="M933 142l25-2v25l-25 4z" fill="#f2f2f2" stroke="#ccc" stroke-width=".6" />
              <path d="M925 139l25-2 8 3-25 2z" fill="#e8e8e8" stroke="#ccc" stroke-width=".6" />
              <text x="945.500" y="158" class="cube-text">FRONTAL</text>
              <circle cx="910" cy="170" r="2" fill="none" stroke="#ccc" />
              <circle cx="955" cy="177" r="2" fill="none" stroke="#ccc" />
              <circle cx="967" cy="163" r="2" fill="none" stroke="#ccc" />
            </g>
            <g class="navbar">
              <rect x="969.500" y="195.500" width="18" height="60" rx="3" fill="#fafafa" stroke="#aaa" />
              <circle cx="983" cy="198.500" r="1.600" fill="none" stroke="#aaa" />
              <circle cx="983" cy="252" r="1.600" fill="none" stroke="#aaa" />
              <circle cx="978" cy="212" r="5.500" fill="#eee" stroke="#999" />
              <circle cx="978" cy="212" r="3.200" fill="#fff" stroke="#aaa" />
              <path d="M977 221.500h2l-1 1.500z" fill="#666" />
              <path d="M972 225.500h14" stroke="#ddd" />
              <rect x="974" y="229.500" width="6" height="5.500" fill="#8fc27a" />
              <circle cx="980" cy="236" r="1.600" fill="none" stroke="#666" />
              <path d="M977 242.500h2l-1 1.500z" fill="#666" />
            </g>
          </svg>
          <div class="rscroll">
            <span class="arrow">⌃</span>
            <span class="arrow">⌄</span>
          </div>
        </div>
        <div class="vbar">
          <span class="scale">1 : 200</span>
          <svg v-for="v in viewBar" :key="v" class="i11 vb"><use :href="`#${v}`" /></svg>
          <div class="hscroll">
            <span class="harrow">‹</span>
            <i class="hthumb" />
            <span class="harrow">›</span>
          </div>
        </div>
      </section>
    </main>

    <footer class="status">
      <span class="status-text">Clic para seleccionar, TAB para alternar, CTRL para añadir y MAYÚS para anular una selección.</span>
      <svg class="i12 st-work"><use href="#s-work" /></svg>
      <div class="combo w-work"><span class="chev">⌵</span></div>
      <svg class="i12 st-sync"><use href="#s-sync" /></svg>
      <span class="st-zero">:0</span>
      <svg class="i12 st-model"><use href="#s-model" /></svg>
      <svg class="i12 st-opt"><use href="#s-opt" /></svg>
      <div class="combo w-model">Modelo base<span class="chev">⌵</span></div>
      <div class="st-right">
        <svg v-for="s in statusIcons" :key="s" class="i13"><use :href="`#${s}`" /></svg>
        <span class="st-filter"><svg class="i13"><use href="#s-filter" /></svg>:1</span>
      </div>
    </footer>
  </div>
</template>

<style>
html, body { margin: 0; background: #fff; overflow: hidden; }
</style>

<style scoped>
.app {
  width: 999px;
  height: 514px;
  display: flex;
  flex-direction: column;
  overflow: hidden;
  background: #c9c9c9;
  font: 8.3px/1 Roboto, "Noto Sans", sans-serif;
  letter-spacing: -.22px;
  text-rendering: geometricPrecision;
  color: #444;
  filter: blur(.3px);
}
.defs { display: none; }
svg { display: block; flex: none; }
.i9 { width: 9px; height: 9px; }
.i11 { width: 11px; height: 11px; }
.i12 { width: 12px; height: 12px; display: block; }
.i13 { width: 13px; height: 13px; }
.i18 { width: 20px; height: 20px; }
.i20 { width: 22px; height: 22px; }
.i22 { width: 22px; height: 22px; }
.short { height: 14px; width: 20px; }
.col .i12 { width: 14px; height: 14px; }
.caret {
  display: inline-block;
  width: 0;
  height: 0;
  border: 2px solid transparent;
  border-top: 2.500px solid #555;
  border-bottom: 0;
}
.caret.dark { border-top-color: #222; }

/* pestañas superiores */
.tabs {
  height: 11px;
  flex: none;
  display: flex;
  align-items: center;
  gap: 12px;
  background: #cdcdcd;
  color: #555;
  line-height: 9px;
}
.tab-file {
  width: 37px;
  height: 11px;
  margin-right: -4px;
  text-align: center;
  background: #2a76b3;
  color: #e8f2fa;
}
.tab { white-space: nowrap; }
.tab-active {
  height: 11px;
  padding: 0 5px;
  margin-left: -7px;
  background: #e7efdb;
  color: #444;
  white-space: nowrap;
}
.qat { width: 14px; height: 9px; margin-left: 8px; }
.tabs .caret { margin-left: -9px; }

/* cinta */
.ribbon {
  height: 62px;
  flex: none;
  display: flex;
  background: #e7efdb;
  border-bottom: 1px solid #dde5d2;
  box-sizing: border-box;
}
.panel { display: flex; flex-direction: column; background: #f0f0f0; flex: none; }
.panel.ctx { background: transparent; margin-left: 1px; }
.panel.ctx .pbody { background: #f0f0f0; }
.pbody { height: 50px; display: flex; flex: none; box-sizing: border-box; }
.pbody.row { align-items: flex-start; }
.pbody.stack { flex-direction: column; }
.pbody.center { justify-content: center; align-items: center; }
.plabel {
  flex: 1;
  display: flex;
  align-items: center;
  justify-content: center;
  gap: 3px;
  color: #555;
  white-space: nowrap;
}
.p-sel { width: 56px; }
.p-prop { width: 51px; }
.p-port { width: 51px; }
.p-geo { width: 99px; }
.p-mod { width: 156px; }
.p-vis { width: 46px; }
.p-med { width: 33px; }
.p-cre { width: 52px; }
.p-modo { width: 32px; }
.p-ana { width: 37px; }
.p-pil { width: 119px; }
.p-ref { width: 37px; }

.modbtn {
  width: 37px;
  height: 47px;
  box-sizing: border-box;
  margin-left: 1px;
  display: flex;
  flex-direction: column;
  align-items: center;
  gap: 3px;
  background: #bcd7f0;
  border: 1px solid #6aa6dc;
  color: #3a3a3a;
}
.big-a { margin-top: 1px; }
.propbtn {
  width: 25px;
  height: 22px;
  margin-top: 2px;
  display: flex;
  justify-content: center;
  align-items: center;
  background: #c2dcf3;
  border: 1px solid #8dbbe3;
  box-sizing: border-box;
}
.bigcol {
  display: flex;
  flex-direction: column;
  align-items: center;
  width: 100%;
  padding-top: 2px;
  gap: 4px;
  line-height: 10.500px;
  text-align: center;
  white-space: nowrap;
}
.bigcol.narrow { width: 32px; flex: none; }
.bigcol.half-a { width: 52px; flex: none; }
.bigcol.half-b { width: 62px; flex: none; }
.col {
  display: flex;
  flex-direction: column;
  justify-content: space-between;
  align-items: center;
  height: 44px;
  margin-top: 3px;
  flex: none;
  width: 16px;
}
.col.wide { width: 17.500px; }
.line { display: flex; align-items: center; gap: 3px; }
.line b { font-weight: 400; }
.geo-text { width: 56px; align-items: flex-start; padding-left: 3px; box-sizing: border-box; }
.vis-a { width: 24px; padding-left: 3px; box-sizing: border-box; align-items: flex-start; }
.bigstack {
  width: 26px;
  height: 48px;
  margin-top: 1px;
  display: flex;
  flex-direction: column;
  justify-content: space-between;
  align-items: center;
  flex: none;
}
.med { padding: 4px 0 0 1px; gap: 6px; }
.med .line { gap: 1px; }
.crear { padding-left: 2px; }

/* barra de opciones */
.options {
  height: 17px;
  flex: none;
  display: flex;
  align-items: center;
  background: #e7efdb;
  box-sizing: border-box;
  border-bottom: 1px solid #d8d8d8;
}
.ctx-name {
  width: 137px;
  padding-left: 6px;
  box-sizing: border-box;
  color: #aeb4a6;
  height: 100%;
  line-height: 16px;
  border-right: 1px solid #c8cebe;
  white-space: nowrap;
}
.opt-check { display: flex; align-items: center; gap: 2px; margin-left: 6px; color: #333; }

/* zona central */
.main {
  flex: 1;
  min-height: 0;
  display: flex;
  gap: 1px;
  padding-top: 1px;
  background: #c9c9c9;
}
.phead {
  height: 14px;
  flex: none;
  display: flex;
  align-items: center;
  justify-content: space-between;
  padding: 0 4px 0 2px;
  background: #f0f0f0;
  color: #444;
  white-space: nowrap;
}
.close { font: 700 9px/1 "DejaVu Sans", sans-serif; color: #222; }

.browser { width: 195px; flex: none; display: flex; flex-direction: column; background: #fff; }
.tree { list-style: none; margin: 0; padding: .6px 0 0; }
.node {
  position: relative;
  height: 11.400px;
  display: flex;
  align-items: center;
  white-space: nowrap;
  color: #3d3d3d;
}
.lv0 { padding-left: 14px; }
.lv1 { padding-left: 31px; }
.lv2 { padding-left: 45px; }
.vl { position: absolute; top: 0; bottom: 0; width: 1px; background: #d6d6d6; }
.vl.a { left: 6px; }
.vl.b { left: 20px; }
.vl.c { left: 33px; }
.vl.half { bottom: 50%; }
.vl.start { top: 50%; }
.hl { position: absolute; top: 50%; height: 1px; background: #d6d6d6; }
.lv0 .hl { left: 6px; width: 8px; }
.lv1 .hl { left: 20px; width: 10px; }
.lv2 .hl { left: 33px; width: 10px; }
.exp { position: absolute; top: 1.500px; width: 8px; height: 8px; }
.lv0 .exp { left: 2.500px; }
.lv1 .exp { left: 16.500px; }
.node-icon { margin-right: 2px; position: relative; background: #fff; }
.node span { position: relative; background: #fff; padding: 0 1px; margin-left: -1px; }
.node .bold { font-weight: 700; background: #e6e6e6; }

.palette { width: 197px; flex: none; display: flex; flex-direction: column; background: #f0f0f0; }
.palette .phead { padding-left: 3px; padding-right: 3px; }
.type { height: 45px; display: flex; align-items: center; padding: 0 3px 0 4px; flex: none; }
.thumb { width: 43px; height: 43px; background: #fff; display: flex; justify-content: center; align-items: center; flex: none; }
.pillar {
  display: block;
  width: 8px;
  height: 38px;
  background: linear-gradient(90deg, #8d8d8d 50%, #3f3f3f 50%);
  border-radius: 1px;
}
.type-name { flex: 1; padding-left: 3px; line-height: 11.400px; color: #555; white-space: nowrap; }
.filter { height: 16px; display: flex; align-items: center; padding-left: 2px; gap: 3px; flex: none; }
.filter-box {
  width: 139px;
  height: 14px;
  box-sizing: border-box;
  display: flex;
  align-items: center;
  justify-content: space-between;
  padding: 0 3px 0 2px;
  background: #f4f4f4;
  border: 1px solid #d8d8d8;
  white-space: nowrap;
  color: #333;
}
.chev { color: #999; font: 8px/1 "DejaVu Sans", sans-serif; }
.edit-type { display: flex; align-items: center; gap: 1px; color: #333; white-space: nowrap; }
.props-wrap { display: flex; padding-left: 2px; flex: none; height: 312px; }
.ptable { width: 183px; flex: none; background: #fff; }
.prow {
  height: 12.480px;
  display: grid;
  grid-template-columns: 87px 87px 9px;
  align-items: center;
  box-sizing: border-box;
  border-bottom: 1px solid #e2e2e2;
  white-space: nowrap;
  color: #333;
}
.prow.group {
  display: flex;
  justify-content: space-between;
  background: #dcdcdc;
  border-bottom: 0;
  padding: 0 4px 0 1px;
  color: #333;
}
.gmark { font: 7px/1 "DejaVu Sans", sans-serif; color: #333; }
.pname { padding: 1px 0 0 5px; overflow: hidden; }
.pval {
  height: 100%;
  display: flex;
  align-items: center;
  padding: 1px 0 0 1px;
  border-left: 1px solid #cfcfcf;
  border-right: 1px solid #cfcfcf;
  box-sizing: border-box;
  overflow: hidden;
}
.pval.active { outline: 1px solid #666; outline-offset: -1px; background: #fff; }
.ro .pname, .ro .pval { color: #a0a0a0; }
.pbtn { height: 100%; display: flex; justify-content: center; }
.pbtn-thumb { display: block; width: 7px; height: 100%; box-sizing: border-box; background: #eee; border: 1px solid #aaa; }
.vscroll {
  width: 11px;
  margin-left: 1px;
  display: flex;
  flex-direction: column;
  align-items: center;
  background: #f0f0f0;
}
.arrow { font: 700 8px/9px "DejaVu Sans", sans-serif; height: 9px; color: #444; flex: none; }
.arrow.down { margin-top: auto; }
.vthumb { display: block; width: 100%; height: 275px; background: #cdcdcd; }
.pfoot {
  flex: 1;
  display: flex;
  align-items: center;
  justify-content: space-between;
  padding: 0 2px 0 3px;
  background: #f6f6f6;
}
.help { color: #1b6ac0; text-decoration: underline; white-space: nowrap; }
.apply {
  width: 45px;
  height: 14px;
  line-height: 14px;
  text-align: center;
  background: #cccccc;
  color: #8a8a8a;
}

/* vista 3D */
.view { flex: 1; min-width: 0; display: flex; flex-direction: column; background: #fff; }
.vtabs { height: 13px; flex: none; display: flex; background: #c9c9c9; }
.vtab {
  width: 83.300px;
  display: flex;
  align-items: center;
  gap: 3px;
  padding-left: 4px;
  box-sizing: border-box;
  color: #555;
  flex: none;
}
.vtab.on { background: #fff; color: #333; font-weight: 700; padding-left: 3px; gap: 5px; }
.vtab .close { margin-left: auto; margin-right: 3px; }
.canvas-row { flex: 1; min-height: 0; display: flex; }
.canvas { width: 594px; height: 381px; flex: none; }
.dim { font: 9px Roboto, sans-serif; fill: #3a66c8; text-anchor: middle; }
.cube-text { font: 6.500px Roboto, sans-serif; fill: #888; text-anchor: middle; }
.rscroll {
  flex: 1;
  display: flex;
  flex-direction: column;
  justify-content: space-between;
  align-items: center;
  padding: 3px 0;
  background: #f0f0f0;
}
.vbar {
  height: 12px;
  flex: none;
  display: flex;
  align-items: center;
  background: #f0f0f0;
}
.scale { width: 49px; padding-left: 16px; box-sizing: border-box; flex: none; white-space: nowrap; color: #444; }
.vb { margin-right: 1.850px; }
.hscroll { flex: 1; display: flex; align-items: center; padding: 0 4px 0 6px; justify-content: space-between; }
.harrow { font: 700 9px/10px "DejaVu Sans", sans-serif; color: #444; }
.hthumb { display: block; width: 12px; height: 10px; background: #cdcdcd; margin-right: 12px; }

/* barra de estado */
.status {
  height: 17px;
  flex: none;
  display: flex;
  align-items: center;
  background: #c9c9c9;
  color: #333;
}
.status-text { width: 354px; padding-left: 2px; box-sizing: border-box; flex: none; white-space: nowrap; }
.st-work { margin-left: 1px; }
.combo {
  height: 13px;
  box-sizing: border-box;
  display: flex;
  align-items: center;
  justify-content: space-between;
  padding: 0 3px;
  background: #f4f4f4;
  color: #aaa;
  flex: none;
}
.w-work { width: 132px; margin-left: 3px; justify-content: flex-end; }
.w-model { width: 132px; margin-left: 3px; }
.st-sync { margin-left: 4px; }
.st-zero { margin-left: 2px; width: 17px; }
.st-opt { margin-left: 4px; }
.st-right { margin-left: auto; display: flex; align-items: center; gap: 2.600px; padding-right: 37px; }
.st-filter { display: flex; align-items: center; }
</style>
